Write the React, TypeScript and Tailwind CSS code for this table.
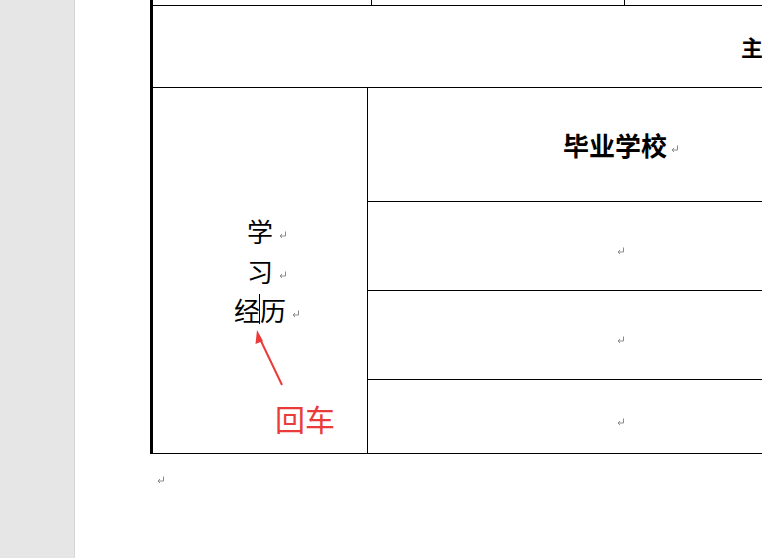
const cjk = { fontFamily: '"Noto Sans CJK SC", "Noto Sans", sans-serif' };

function ReturnMark({ className = "" }: { className?: string }) {
  return (
    <svg width="8" height="8" viewBox="0 0 8 8" className={className}>
      <path d="M6.5 0.5 V5 H1.5" fill="none" stroke="#8a8a8a" strokeWidth="1" />
      <path d="M1 5 L3 3 M1 5 L3 7" fill="none" stroke="#8a8a8a" strokeWidth="1" />
    </svg>
  );
}

function EmptyCell({ h }: { h: string }) {
  return (
    <div className={`${h} flex items-center justify-center border-b border-black`}>
      <ReturnMark className="mt-[10px]" />
    </div>
  );
}

export default function App() {
  return (
    <div className="flex h-[558px] w-[762px] overflow-hidden bg-white" style={cjk}>
      <div className="w-[75px] shrink-0 border-r border-[#d6d6d6] bg-[#e6e6e6]" />

      <div className="relative flex-1 pl-[75px]">
        {/* table */}
        <div className="w-[740px] border-l-[3px] border-black">
          <div className="flex h-[6px] border-b border-black">
            <div className="w-[219px] border-r border-black" />
            <div className="w-[253px] border-r border-black" />
          </div>

          <div className="flex h-[82px] items-center border-b border-black pl-[588px]">
            <span className="whitespace-nowrap text-[22px] font-bold text-black">主</span>
          </div>

          <div className="flex border-b border-black">
            <div className="flex w-[215px] shrink-0 flex-col items-center justify-center border-r border-black pl-[14px] text-[26px] leading-[39.5px] text-black">
              <div className="flex items-center gap-[6px]">
                <span>学</span>
                <ReturnMark className="mt-[8px]" />
              </div>
              <div className="flex items-center gap-[6px]">
                <span>习</span>
                <ReturnMark className="mt-[8px]" />
              </div>
              <div className="flex items-center gap-[6px]">
                <span className="relative">
                  经历
                  <span className="absolute left-[25px] top-[4px] h-[30px] w-px bg-black" />
                </span>
                <ReturnMark className="mt-[8px]" />
              </div>
            </div>

            <div className="w-[506px] shrink-0">
              <div className="flex h-[114px] items-center justify-center gap-[4px] border-b border-black">
                <span className="text-[26px] font-bold leading-none text-black">毕业学校</span>
                <ReturnMark className="mt-[8px]" />
              </div>
              <EmptyCell h="h-[89px]" />
              <EmptyCell h="h-[89px]" />
              <div className="flex h-[73px] items-center justify-center">
                <ReturnMark className="mt-[10px]" />
              </div>
            </div>
          </div>
        </div>

        <div className="mt-[22px] pl-[7px]">
          <ReturnMark />
        </div>

        {/* annotation */}
        <svg className="absolute left-[170px] top-[325px]" width="40" height="70" viewBox="0 0 40 70">
          <path d="M37 60 L15 14" stroke="#ea3a3a" strokeWidth="2" fill="none" />
          <path d="M12 5 L10.5 19 L18 16 Z" fill="#ea3a3a" />
        </svg>
        <span className="absolute left-[200px] top-[396px] text-[30px] leading-[44px] text-[#ea3a3a]">回车</span>
      </div>
    </div>
  );
}
